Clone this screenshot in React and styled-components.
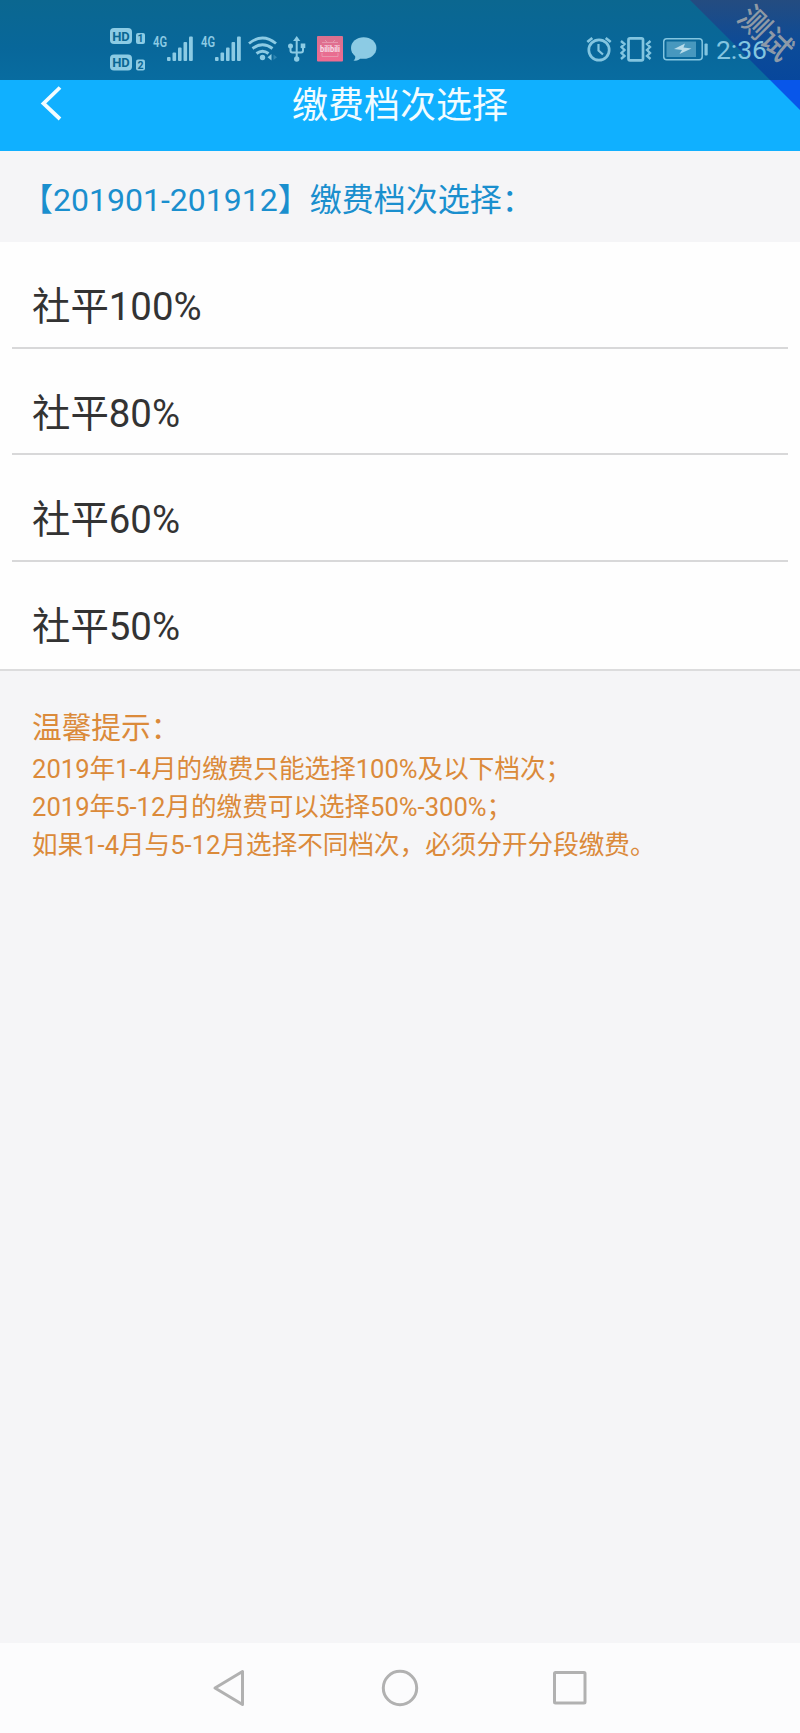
import React from "react";
import styled, { createGlobalStyle } from "styled-components";

const GlobalStyle = createGlobalStyle`
  * { box-sizing: border-box; }
  body {
    margin: 0;
    background: #f5f5f7;
    font-family: Roboto, "Noto Sans CJK SC", sans-serif;
    text-spacing-trim: space-all;
  }
`;

const Screen = styled.div`
  position: relative;
  display: flex;
  flex-direction: column;
  width: 800px;
  height: 1733px;
  background: #f5f5f7;
  overflow: hidden;
`;

const StatusBar = styled.header`
  display: flex;
  justify-content: space-between;
  height: 80px;
  padding: 24px 33px 0 107px;
  background: linear-gradient(#0b6790, #08679a 60%, #086ca0);
`;

const StatusGroup = styled.div`
  position: relative;
  z-index: 2;
  display: flex;
  align-items: center;
  height: 50px;
  color: ${(p) => p.$color};
  svg { display: block; flex: none; }
`;

const Clock = styled.time`
  font-size: 26.5px;
  line-height: 30px;
  padding-top: 1px;
`;

const Ribbon = styled.div`
  position: absolute;
  z-index: 1;
  top: 0;
  right: 0;
  width: 110px;
  height: 110px;
  clip-path: polygon(0 0, 100% 0, 100% 100%);
  background: linear-gradient(#244c80 0, #0c4b98 45px, #07479c 80px, #0856ea 80px);
`;

const RibbonLabel = styled.span`
  position: absolute;
  z-index: 3;
  top: 19px;
  left: 734px;
  width: 62px;
  text-align: center;
  font-size: 31px;
  line-height: 30px;
  font-weight: 500;
  color: rgba(170, 172, 172, 0.82);
  transform: rotate(45deg);
`;

const TitleBar = styled.div`
  display: grid;
  grid-template-columns: 120px 1fr 120px;
  height: 71px;
  background: #10b0ff;
  color: #f2fcff;
`;

const BackButton = styled.button`
  display: flex;
  align-items: flex-start;
  padding: 5px 0 0 39px;
  border: 0;
  background: none;
  color: inherit;
`;

const Title = styled.h1`
  margin: 0;
  padding-top: 1px;
  text-align: center;
  font-size: 36px;
  line-height: 50px;
  font-weight: 400;
`;

const Period = styled.h2`
  margin: 0;
  height: 91px;
  padding: 25px 0 0 21px;
  font-size: 32px;
  line-height: 48px;
  font-weight: 400;
  color: #1a8fce;
  white-space: nowrap;
`;

const TierList = styled.ul`
  margin: 0;
  padding: 0 12px;
  height: 429px;
  list-style: none;
  background: #fefefe;
  border-bottom: 2px solid #dcdcdd;
`;

const Tier = styled.li`
  height: 106.6px;
  padding: 38px 0 0 20px;
  font-size: 38.4px;
  line-height: 54px;
  color: #333;
  border-bottom: 2px solid #d8d8d9;
  &:last-child { border-bottom: 0; }
`;

const Tips = styled.section`
  flex: 1;
  padding: 34px 32px;
  color: #db8a3a;
`;

const TipsTitle = styled.h3`
  margin: 0;
  font-size: 29.7px;
  line-height: 46px;
  font-weight: 400;
`;

const Tip = styled.p`
  margin: 0;
  font-size: 25.6px;
  line-height: 37.8px;
  white-space: nowrap;
`;

const NavBar = styled.nav`
  display: flex;
  justify-content: center;
  align-items: center;
  gap: 130px;
  height: 90px;
  background: #fcfcfd;
  svg { display: block; }
`;

function HdBadges() {
  return (
    <svg width="45" height="50" viewBox="107 24 45 50">
      {[28, 54.5].map((y, i) => (
        <g key={y}>
          <rect x="110" y={y} width="22" height="16" rx="4" fill="currentColor" />
          <text x="121" y={y + 12.8} textAnchor="middle" fontSize="13" fontWeight="700" fill="#0a6793">HD</text>
          <rect x="136" y={y + 5} width="9" height="11" rx="2" fill="currentColor" />
          <text x="140.5" y={y + 14.3} textAnchor="middle" fontSize="10.5" fontWeight="700" fill="#0a6793">{i + 1}</text>
        </g>
      ))}
    </svg>
  );
}

function Signal() {
  return (
    <svg width="48" height="50" viewBox="152 24 48 50" fill="currentColor">
      <text x="153" y="47" fontSize="14" fontWeight="600" textLength="14" lengthAdjust="spacingAndGlyphs">4G</text>
      <rect x="167" y="57" width="3.6" height="4" rx="1" />
      <rect x="172.5" y="52.5" width="3.6" height="8.5" rx="1" />
      <rect x="178" y="47.5" width="3.6" height="13.5" rx="1" />
      <rect x="183.5" y="42" width="3.6" height="19" rx="1" />
      <rect x="189" y="36.5" width="3.8" height="24.5" rx="1" />
    </svg>
  );
}

function Wifi() {
  return (
    <svg width="39" height="50" viewBox="248 24 39 50" fill="none" stroke="currentColor" strokeWidth="2.9">
      <path d="M249 43.5Q262.5 32.5 276 43.5" />
      <path d="M252.5 48.5Q262.5 41 272.5 48.5" />
      <path d="M256.5 53.5Q262.5 49 268.5 53.5" />
      <circle cx="262.5" cy="57.5" r="2.7" fill="currentColor" stroke="none" />
      <path d="M271.500 54v6.500l-4-3.200z" fill="currentColor" stroke="none" />
      <path d="M273.500 54.500v5.500l3.500-2.800z" fill="currentColor" stroke="none" opacity=".3" />
    </svg>
  );
}

function Usb() {
  return (
    <svg width="30" height="50" viewBox="287 24 30 50" fill="none" stroke="currentColor" strokeWidth="2">
      <path d="M296.700 39v20M290.500 47v3.500q0 2 2 2h8.500q2 0 2-2V47" />
      <path d="M296.700 36l3.600 5h-7.200z" fill="currentColor" stroke="none" />
      <circle cx="296.7" cy="59" r="2.7" fill="currentColor" stroke="none" />
      <circle cx="290.5" cy="46" r="2.5" fill="currentColor" stroke="none" />
      <rect x="300.7" y="43.5" width="4.6" height="4.6" fill="currentColor" stroke="none" />
    </svg>
  );
}

function VideoApp() {
  return (
    <svg width="34" height="50" viewBox="317 24 34 50">
      <defs>
        <linearGradient id="appPink" x2="0" y2="1">
          <stop stopColor="#d9718f" />
          <stop offset="1" stopColor="#ef6b91" />
        </linearGradient>
      </defs>
      <rect x="317" y="36" width="26" height="25.5" rx="1" fill="url(#appPink)" />
      <path d="M325 40l2 2M335 40l-2 2M322 42.500h16M322 53v3.500h16V53" fill="none" stroke="#e9a0b5" strokeWidth=".8" />
      <text x="320" y="52" fontSize="9" fontWeight="700" fill="#f8dfe8" textLength="20" lengthAdjust="spacingAndGlyphs">bilibili</text>
    </svg>
  );
}

function Bubble() {
  return (
    <svg width="26" height="50" viewBox="351 24 26 50" fill="currentColor">
      <ellipse cx="363.7" cy="48" rx="12.7" ry="10.8" />
      <path d="M355 55q1 3.500-1.500 5.500q5 .8 8.500-3.500z" />
    </svg>
  );
}

function Alarm() {
  return (
    <svg width="34" height="50" viewBox="586 24 34 50" fill="none" stroke="currentColor" strokeWidth="2.7">
      <circle cx="599" cy="50" r="10.2" />
      <path d="M598.500 44v6.500l4.500 4" strokeWidth="2.2" />
      <path d="M587.300 42l5-4M610.700 42l-5-4" />
    </svg>
  );
}

function Vibrate() {
  return (
    <svg width="43" height="50" viewBox="620 24 43 50" fill="none" stroke="currentColor" strokeWidth="2.7">
      <rect x="628.5" y="38.3" width="14.5" height="22" rx="1.5" />
      <path d="M621 41l3.500 3-3 3 3 3-3 3 3 3-3.500 3M650.500 41l-3.500 3 3 3-3 3 3 3-3 3 3.500 3" strokeWidth="2.4" />
    </svg>
  );
}

function Battery() {
  return (
    <svg width="53" height="50" viewBox="663 24 53 50" fill="currentColor">
      <rect x="663.7" y="38.7" width="38.5" height="21" rx="3" fill="none" stroke="currentColor" strokeWidth="1.5" />
      <rect x="666.5" y="41.5" width="29.5" height="15.5" opacity=".52" />
      <rect x="704.5" y="43.5" width="3.2" height="12" rx="1" />
      <path d="M685 43.500l-11 5.500 8 1-2.500 4 12-5.500-8-1z" fill="#b8dcea" />
    </svg>
  );
}

const TIERS = ["社平100%", "社平80%", "社平60%", "社平50%"];
const TIPS = [
  "2019年1-4月的缴费只能选择100%及以下档次；",
  "2019年5-12月的缴费可以选择50%-300%；",
  "如果1-4月与5-12月选择不同档次，必须分开分段缴费。",
];

export default function App() {
  return (
    <Screen lang="zh-CN">
      <GlobalStyle />
      <StatusBar>
        <StatusGroup $color="#8ccbe4">
          <HdBadges />
          <Signal />
          <Signal />
          <Wifi />
          <Usb />
          <VideoApp />
          <Bubble />
        </StatusGroup>
        <StatusGroup $color="#83c5e0">
          <Alarm />
          <Vibrate />
          <Battery />
          <Clock>2:36</Clock>
        </StatusGroup>
      </StatusBar>
      <Ribbon />
      <RibbonLabel>测试</RibbonLabel>
      <TitleBar>
        <BackButton aria-label="返回">
          <svg width="26" height="38" viewBox="0 0 26 38" fill="none" stroke="currentColor" strokeWidth="3.8">
            <path d="M21 2.500L4.500 18.500 21 34" />
          </svg>
        </BackButton>
        <Title>缴费档次选择</Title>
      </TitleBar>
      <Period>【201901-201912】缴费档次选择：</Period>
      <TierList>
        {TIERS.map((t) => <Tier key={t}>{t}</Tier>)}
      </TierList>
      <Tips>
        <TipsTitle>温馨提示：</TipsTitle>
        {TIPS.map((t) => <Tip key={t}>{t}</Tip>)}
      </Tips>
      <NavBar>
        <svg width="40" height="40" viewBox="210 1668 40 40" fill="none" stroke="#b1b1b1" strokeWidth="3" strokeLinejoin="round">
          <path d="M215 1688L242.500 1671.500V1704.500Z" />
        </svg>
        <svg width="40" height="40" viewBox="380 1668 40 40" fill="none" stroke="#b1b1b1" strokeWidth="3">
          <circle cx="400" cy="1688" r="16.7" />
        </svg>
        <svg width="40" height="40" viewBox="550 1668 40 40" fill="none" stroke="#b1b1b1" strokeWidth="3">
          <rect x="554.5" y="1672.5" width="30.5" height="30.5" rx="1" />
        </svg>
      </NavBar>
    </Screen>
  );
}
